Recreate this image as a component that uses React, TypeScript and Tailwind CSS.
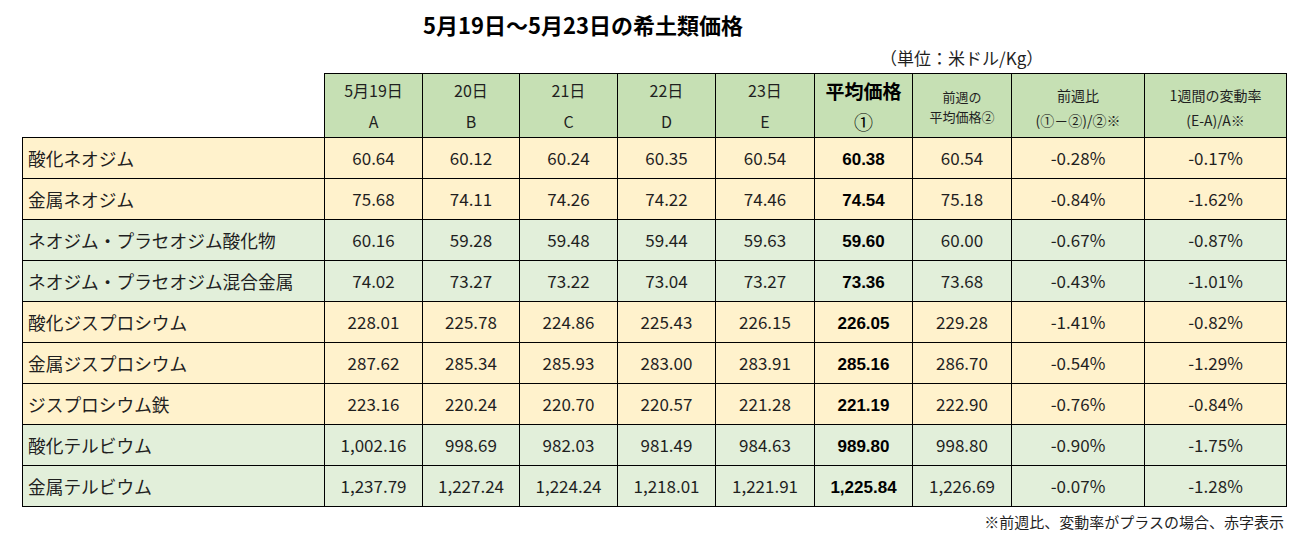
const rows = [
  { name: "酸化ネオジム", v: ["60.64", "60.12", "60.24", "60.35", "60.54"], avg: "60.38", prev: "60.54", r1: "-0.28%", r2: "-0.17%", bg: "bg-[#fff2cc]" },
  { name: "金属ネオジム", v: ["75.68", "74.11", "74.26", "74.22", "74.46"], avg: "74.54", prev: "75.18", r1: "-0.84%", r2: "-1.62%", bg: "bg-[#fff2cc]" },
  { name: "ネオジム・プラセオジム酸化物", v: ["60.16", "59.28", "59.48", "59.44", "59.63"], avg: "59.60", prev: "60.00", r1: "-0.67%", r2: "-0.87%", bg: "bg-[#e2efda]" },
  { name: "ネオジム・プラセオジム混合金属", v: ["74.02", "73.27", "73.22", "73.04", "73.27"], avg: "73.36", prev: "73.68", r1: "-0.43%", r2: "-1.01%", bg: "bg-[#e2efda]" },
  { name: "酸化ジスプロシウム", v: ["228.01", "225.78", "224.86", "225.43", "226.15"], avg: "226.05", prev: "229.28", r1: "-1.41%", r2: "-0.82%", bg: "bg-[#fff2cc]" },
  { name: "金属ジスプロシウム", v: ["287.62", "285.34", "285.93", "283.00", "283.91"], avg: "285.16", prev: "286.70", r1: "-0.54%", r2: "-1.29%", bg: "bg-[#fff2cc]" },
  { name: "ジスプロシウム鉄", v: ["223.16", "220.24", "220.70", "220.57", "221.28"], avg: "221.19", prev: "222.90", r1: "-0.76%", r2: "-0.84%", bg: "bg-[#fff2cc]" },
  { name: "酸化テルビウム", v: ["1,002.16", "998.69", "982.03", "981.49", "984.63"], avg: "989.80", prev: "998.80", r1: "-0.90%", r2: "-1.75%", bg: "bg-[#e2efda]" },
  { name: "金属テルビウム", v: ["1,237.79", "1,227.24", "1,224.24", "1,218.01", "1,221.91"], avg: "1,225.84", prev: "1,226.69", r1: "-0.07%", r2: "-1.28%", bg: "bg-[#e2efda]" },
];

const days = [
  ["5月19日", "A"],
  ["20日", "B"],
  ["21日", "C"],
  ["22日", "D"],
  ["23日", "E"],
];

function App() {
  return (
    <div className="w-[1307px] h-[537px] bg-white text-[#1f1f1f] font-['Noto_Sans_CJK_JP',sans-serif]">
      <div className="w-[1166px] pt-[8px] text-center text-[22px] font-bold leading-[32px] text-black">
        5月19日～5月23日の希土類価格
      </div>
      <div className="pl-[880px] pt-[2px] text-[17px] leading-[31px]">（単位：米ドル/Kg）</div>

      <table className="ml-[22px] w-[1264px] table-fixed border-collapse text-[17px]">
        <colgroup>
          <col className="w-[302px]" />
          <col className="w-[98px]" />
          <col className="w-[97px]" />
          <col className="w-[98px]" />
          <col className="w-[98px]" />
          <col className="w-[99px]" />
          <col className="w-[98px]" />
          <col className="w-[99px]" />
          <col className="w-[133px]" />
          <col className="w-[142px]" />
        </colgroup>
        <thead>
          <tr className="h-[64px]">
            <th className="border-0 p-0"></th>
            {days.map((d) => (
              <th key={d[0]} className="border border-black bg-[#c6e0b4] p-0 text-center font-normal text-[16px] leading-[31px]">
                <div>{d[0]}</div>
                <div>{d[1]}</div>
              </th>
            ))}
            <th className="border border-black bg-[#c6e0b4] p-0 text-center font-bold text-[19px] leading-[31px] text-black">
              <div>平均価格</div>
              <div className="font-normal">①</div>
            </th>
            <th className="border border-black bg-[#c6e0b4] p-0 pt-[2px] text-center font-normal text-[13px] leading-[20px]">
              <div>前週の</div>
              <div>平均価格②</div>
            </th>
            <th className="border border-black bg-[#c6e0b4] p-0 pt-[4px] text-center font-normal text-[14px] leading-[25px]">
              <div>前週比</div>
              <div>(①－②)/②※</div>
            </th>
            <th className="border border-black bg-[#c6e0b4] p-0 pt-[4px] text-center font-normal text-[14px] leading-[25px]">
              <div>1週間の変動率</div>
              <div>(E-A)/A※</div>
            </th>
          </tr>
        </thead>
        <tbody>
          {rows.map((r) => (
            <tr key={r.name} className={"h-[41px] " + r.bg}>
              <td className="border border-black pl-[5px] text-left text-[17.7px] whitespace-nowrap">{r.name}</td>
              {r.v.map((x, i) => (
                <td key={i} className="border border-black text-center">{x}</td>
              ))}
              <td className="border border-black pt-[3px] text-center font-bold font-['Liberation_Sans',sans-serif] text-black">{r.avg}</td>
              <td className="border border-black text-center">{r.prev}</td>
              <td className="border border-black text-center">{r.r1}</td>
              <td className="border border-black text-center">{r.r2}</td>
            </tr>
          ))}
        </tbody>
      </table>

      <div className="w-[1284px] pt-[5px] text-right text-[15px] leading-[20px]">※前週比、変動率がプラスの場合、赤字表示</div>
    </div>
  );
}

export default App;
